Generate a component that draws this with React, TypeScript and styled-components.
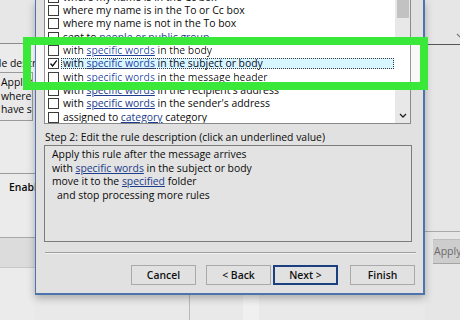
import React from 'react'
import styled, { createGlobalStyle } from 'styled-components'

const GlobalStyle = createGlobalStyle`
  html, body {
    margin: 0;
    padding: 0;
    width: 460px;
    height: 320px;
    overflow: hidden;
    background: #e9e9e9;
  }
  body {
    font-family: 'Open Sans', 'Noto Sans', sans-serif;
    color: #0a0a0a;
  }
`

type Cond = { pre?: string; link?: string; post: string; checked?: boolean }

const conditions: Cond[] = [
  { post: 'where my name is in the Cc box' },
  { post: 'where my name is in the To or Cc box' },
  { post: 'where my name is not in the To box' },
  { pre: 'sent to ', link: 'people or public group', post: '' },
  { pre: 'with ', link: 'specific words', post: ' in the body' },
  { pre: 'with ', link: 'specific words', post: ' in the subject or body', checked: true },
  { pre: 'with ', link: 'specific words', post: ' in the message header' },
  { pre: 'with ', link: 'specific words', post: " in the recipient's address" },
  { pre: 'with ', link: 'specific words', post: " in the sender's address" },
  { pre: 'assigned to ', link: 'category', post: ' category' },
]

const App: React.FC = () => {
  return (
    <Desktop>
      <GlobalStyle />
      <LeftStrip>
        <LeftTop />
        <ClipLabel>Rule description (click an underlined value to edit):</ClipLabel>
        <LeftDescBox>
          <ClipLine>Apply this rule after the message arrives</ClipLine>
          <ClipLine>where my name is in the To or Cc box</ClipLine>
          <ClipLine>have server reply using a specific message</ClipLine>
        </LeftDescBox>
        <EnableRow>Enable rules on all messages</EnableRow>
        <LeftBand />
      </LeftStrip>

      <Middle>
        <BottomStrip>
          <BottomDivider />
          <BottomGlow />
        </BottomStrip>
      </Middle>

      <RightStrip>
        <RightTop>
          <Chevron width="8" height="5" viewBox="0 0 8 5">
            <polyline points="1,1 4,4 7,1" fill="none" stroke="#777" strokeWidth="1.2" />
          </Chevron>
        </RightTop>
        <RightGap />
        <ApplyButton>Apply</ApplyButton>
      </RightStrip>

      <Dialog>
        <ListBox>
          <List>
            {conditions.map((c, i) => (
              <Row key={i}>
                <Check>
                  {c.checked && (
                    <svg width="9" height="9" viewBox="0 0 9 9">
                      <polyline points="1.5,4.5 3.6,7 7.8,1.4" fill="none" stroke="#111" strokeWidth="1.4" />
                    </svg>
                  )}
                </Check>
                <RowText $selected={!!c.checked}>
                  {c.pre}
                  {c.link && <Link>{c.link}</Link>}
                  {c.post}
                </RowText>
              </Row>
            ))}
          </List>
          <ScrollBar>
            <Thumb />
            <ScrollSpacer />
            <svg width="8" height="5" viewBox="0 0 8 5">
              <polyline points="1,1 4,4 7,1" fill="none" stroke="#222" strokeWidth="1.3" />
            </svg>
          </ScrollBar>
        </ListBox>

        <StepLabel>Step 2: Edit the rule description (click an underlined value)</StepLabel>
        <DescBox>
          <DescLine>Apply this rule after the message arrives</DescLine>
          <DescLine>
            with <Link>specific words</Link> in the subject or body
          </DescLine>
          <DescLine>
            move it to the <Link>specified</Link> folder
          </DescLine>
          <DescLine $indent>and stop processing more rules</DescLine>
        </DescBox>

        <Separator />

        <ButtonRow>
          <Button $gap={10}>Cancel</Button>
          <Button $gap={2}>&lt; Back</Button>
          <Button $gap={12} $default>Next &gt;</Button>
          <Button>Finish</Button>
        </ButtonRow>
      </Dialog>

      <Highlight />
    </Desktop>
  )
}

const Desktop = styled.div`
  position: relative;
  width: 460px;
  height: 320px;
  display: flex;
  overflow: hidden;
  background: #e9e9e9;
`

const LeftStrip = styled.div`
  width: 35px;
  flex-shrink: 0;
  display: flex;
  flex-direction: column;
  overflow: hidden;
  background: #ebebeb;
`

const LeftTop = styled.div`
  height: 43px;
  flex-shrink: 0;
  border-bottom: 1px solid #8c8c8c;
  background: #e7e7e7;
`

const ClipLabel = styled.div`
  margin-top: 12px;
  height: 14px;
  font-size: 10.4px;
  font-weight: 500;
  line-height: 14px;
  white-space: nowrap;
  text-indent: -14px;
`

const LeftDescBox = styled.div`
  margin-top: 2px;
  height: 44px;
  padding-top: 3px;
  border-top: 1px solid #9a9a9a;
  border-right: 1px solid #9a9a9a;
  border-bottom: 1px solid #9a9a9a;
  width: 32px;
  overflow: hidden;
  background: #e9e9e9;
`

const ClipLine = styled.div`
  font-size: 10.4px;
  font-weight: 500;
  line-height: 13.5px;
  white-space: nowrap;
  margin-left: 1px;
`

const EnableRow = styled.div`
  margin-top: 52px;
  height: 65px;
  border-top: 1px solid #9c9c9c;
  border-bottom: 1px solid #a8a8a8;
  padding: 7px 0 0 9px;
  box-sizing: border-box;
  font-size: 10.4px;
  font-weight: 600;
  line-height: 13px;
  white-space: nowrap;
  overflow: hidden;
`

const LeftBand = styled.div`
  height: 29px;
  background: #dcdcdc;
  border-bottom: 1px solid #c8c8c8;
`

const Middle = styled.div`
  width: 390px;
  flex-shrink: 0;
  display: flex;
  flex-direction: column;
  justify-content: flex-end;
`

const BottomStrip = styled.div`
  height: 25px;
  display: flex;
  padding-left: 154px;
`

const BottomDivider = styled.div`
  width: 1px;
  background: #b9b9b9;
`

const BottomGlow = styled.div`
  width: 16px;
  margin-left: 53px;
  background: #f0f0f0;
`

const RightStrip = styled.div`
  flex: 1;
  display: flex;
  flex-direction: column;
  background: #e6e6e6;
`

const RightTop = styled.div`
  height: 45px;
  border-bottom: 1px solid #555;
  display: flex;
  justify-content: flex-end;
  align-items: flex-end;
  padding-bottom: 6px;
  box-sizing: border-box;
`

const Chevron = styled.svg`
  margin-right: -3px;
`

const RightGap = styled.div`
  height: 186px;
  border-bottom: 1px solid #a9a9a9;
`

const ApplyButton = styled.div`
  margin: 7px 0 0 8px;
  height: 23px;
  background: #cdcdcd;
  border-top: 1px solid #bdbdbd;
  border-bottom: 1px solid #a5a5a5;
  color: #6b6b6b;
  font-size: 10.5px;
  line-height: 22px;
  padding-left: 1px;
  white-space: nowrap;
`

const Dialog = styled.div`
  position: absolute;
  left: 35px;
  top: 0;
  width: 390px;
  height: 295px;
  box-sizing: border-box;
  background: #e1e1e1;
  border-left: 1px solid #4e74ad;
  border-right: 2px solid #4e74ad;
  border-bottom: 2px solid #4e74ad;
  box-shadow: 0 3px 8px rgba(0, 0, 0, 0.28);
  padding: 0 9px 0 8px;
  display: flex;
  flex-direction: column;
`

const ListBox = styled.div`
  height: 124px;
  flex-shrink: 0;
  margin-right: 3px;
  box-sizing: border-box;
  border: 1px solid #8a8a8a;
  border-top: none;
  background: #fff;
  display: flex;
  overflow: hidden;
`

const List = styled.div`
  flex: 1;
  margin-top: -9.6px;
  padding-left: 3px;
  display: flex;
  flex-direction: column;
`

const Row = styled.div`
  height: 13.33px;
  flex-shrink: 0;
  display: flex;
  align-items: center;
`

const Check = styled.div`
  width: 11px;
  height: 11px;
  box-sizing: border-box;
  border: 1px solid #3a3a3a;
  background: #fff;
  margin-right: 2px;
  flex-shrink: 0;
  display: flex;
  align-items: center;
  justify-content: center;
`

const RowText = styled.div<{ $selected?: boolean }>`
  font-size: 10.4px;
  font-weight: 500;
  line-height: 11px;
  height: 11px;
  padding: 0 2px;
  white-space: nowrap;
  ${(p) =>
    p.$selected &&
    `
    flex: 1;
    margin-right: 1px;
    background: #c4e0f8;
    outline: 1px dotted #333;
    outline-offset: -1px;
  `}
`

const Link = styled.span`
  color: #1c3c8c;
  text-decoration: underline;
  text-underline-offset: 1px;
`

const ScrollBar = styled.div`
  width: 15px;
  flex-shrink: 0;
  background: #e8e8e8;
  display: flex;
  flex-direction: column;
  align-items: center;
  padding-bottom: 5px;
  box-sizing: border-box;
`

const Thumb = styled.div`
  width: 12px;
  height: 18px;
  background: #c2c2c2;
`

const ScrollSpacer = styled.div`
  flex: 1;
`

const StepLabel = styled.div`
  margin-top: 7px;
  height: 13px;
  font-size: 10.4px;
  font-weight: 500;
  line-height: 13px;
  padding-left: 1px;
  white-space: nowrap;
`

const DescBox = styled.div`
  margin-top: 1px;
  margin-right: 2px;
  height: 97px;
  box-sizing: border-box;
  border: 1px solid #7c7c7c;
  background: #e3e3e3;
  padding: 2px 0 0 7px;
`

const DescLine = styled.div<{ $indent?: boolean }>`
  font-size: 10.4px;
  font-weight: 500;
  line-height: 13.5px;
  white-space: nowrap;
  padding-left: ${(p) => (p.$indent ? '5px' : '0')};
`

const Separator = styled.div`
  margin-top: 10px;
  margin-right: -2px;
  margin-left: 1px;
  height: 1px;
  background: #9d9d9d;
  border-bottom: 1px solid #f2f2f2;
`

const ButtonRow = styled.div`
  margin-top: 11px;
  display: flex;
  justify-content: flex-end;
  margin-right: -1px;
`

const Button = styled.div<{ $gap?: number; $default?: boolean }>`
  width: 65px;
  height: 20px;
  box-sizing: border-box;
  margin-right: ${(p) => p.$gap ?? 0}px;
  background: #e1e1e1;
  border: ${(p) => (p.$default ? '2px solid #1b3f7f' : '1px solid #a9a9a9')};
  font-size: 10.4px;
  font-weight: 600;
  color: #111;
  display: flex;
  align-items: center;
  justify-content: center;
`

const Highlight = styled.div`
  position: absolute;
  left: 23px;
  top: 37px;
  width: 405px;
  height: 53px;
  box-sizing: border-box;
  border: 8px solid #3ae83a;
  backdrop-filter: brightness(1.1);
  pointer-events: none;
`

export default App
